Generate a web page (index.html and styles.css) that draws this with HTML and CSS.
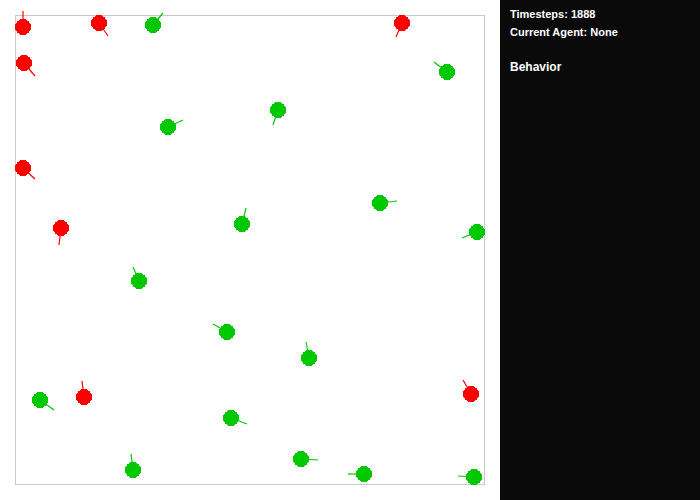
FILE: index.html
```html
<!DOCTYPE html>
<html>
<head>
<meta charset="utf-8">
<link rel="stylesheet" href="styles.css">
</head>
<body>
<div class="app">
  <div class="world">
    <svg class="world-svg" width="500" height="500" viewBox="0 0 500 500">
      <rect class="bounds" x="15.5" y="15.5" width="469" height="469"/>
      <g class="red">
        <line x1="23" y1="27" x2="23" y2="11"/><circle cx="23" cy="27" r="8"/>
        <line x1="99" y1="23" x2="108" y2="36"/><circle cx="99" cy="23" r="8"/>
        <line x1="24" y1="63" x2="35" y2="76"/><circle cx="24" cy="63" r="8"/>
        <line x1="402" y1="23" x2="396" y2="37"/><circle cx="402" cy="23" r="8"/>
        <line x1="23" y1="168" x2="35" y2="179"/><circle cx="23" cy="168" r="8"/>
        <line x1="61" y1="228" x2="59" y2="245"/><circle cx="61" cy="228" r="8"/>
        <line x1="84" y1="397" x2="82" y2="381"/><circle cx="84" cy="397" r="8"/>
        <line x1="471" y1="394" x2="463" y2="380"/><circle cx="471" cy="394" r="8"/>
      </g>
      <g class="green">
        <line x1="153" y1="25" x2="163" y2="13"/><circle cx="153" cy="25" r="8"/>
        <line x1="447" y1="72" x2="434" y2="62"/><circle cx="447" cy="72" r="8"/>
        <line x1="168" y1="127" x2="183" y2="120"/><circle cx="168" cy="127" r="8"/>
        <line x1="278" y1="110" x2="273" y2="125"/><circle cx="278" cy="110" r="8"/>
        <line x1="242" y1="224" x2="246" y2="208"/><circle cx="242" cy="224" r="8"/>
        <line x1="380" y1="203" x2="397" y2="201"/><circle cx="380" cy="203" r="8"/>
        <line x1="477" y1="232" x2="462" y2="238"/><circle cx="477" cy="232" r="8"/>
        <line x1="139" y1="281" x2="133" y2="267"/><circle cx="139" cy="281" r="8"/>
        <line x1="40" y1="400" x2="54" y2="410"/><circle cx="40" cy="400" r="8"/>
        <line x1="227" y1="332" x2="213" y2="324"/><circle cx="227" cy="332" r="8"/>
        <line x1="309" y1="358" x2="306" y2="342"/><circle cx="309" cy="358" r="8"/>
        <line x1="231" y1="418" x2="247" y2="424"/><circle cx="231" cy="418" r="8"/>
        <line x1="133" y1="470" x2="131" y2="454"/><circle cx="133" cy="470" r="8"/>
        <line x1="301" y1="459" x2="318" y2="460"/><circle cx="301" cy="459" r="8"/>
        <line x1="364" y1="474" x2="348" y2="474"/><circle cx="364" cy="474" r="8"/>
        <line x1="474" y1="477" x2="458" y2="476"/><circle cx="474" cy="477" r="8"/>
      </g>
    </svg>
  </div>
  <aside class="panel">
    <p class="stat">Timesteps: 1888</p>
    <p class="stat">Current Agent: None</p>
    <h3 class="section">Behavior</h3>
  </aside>
</div>
</body>
</html>
```
FILE: styles.css
```css
html, body {
  margin: 0;
  padding: 0;
  background: #ffffff;
}
.app {
  display: flex;
  width: 700px;
  height: 500px;
  overflow: hidden;
}
.world {
  width: 500px;
  height: 500px;
  background: #ffffff;
  flex: none;
}
.world-svg {
  display: block;
}
.bounds {
  fill: none;
  stroke: #c8c8c8;
  stroke-width: 1;
  shape-rendering: crispEdges;
}
.red line, .green line {
  stroke-width: 1.2;
}
.red circle, .green circle {
  shape-rendering: crispEdges;
}
.red line { stroke: #ff0000; }
.red circle { fill: #ff0000; }
.green line { stroke: #00c800; }
.green circle { fill: #00c800; }
.panel {
  flex: 1;
  background: #0a0a0a;
  color: #ffffff;
  padding: 5px 10px 0 10px;
  font-family: "Liberation Sans", Arial, sans-serif;
}
.stat {
  margin: 0;
  font-size: 11px;
  font-weight: bold;
  line-height: 18px;
}
.section {
  margin: 17px 0 0 0;
  font-size: 12px;
  font-weight: bold;
  line-height: 18px;
}
```
